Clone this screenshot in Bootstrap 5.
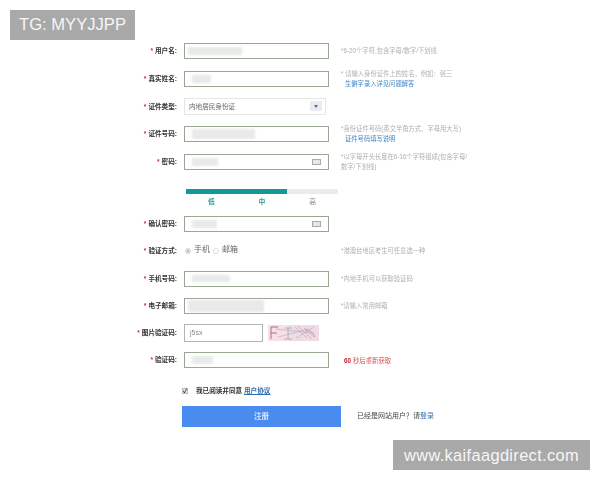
<!DOCTYPE html>
<html lang="zh">
<head>
<meta charset="utf-8">
<link rel="stylesheet" href="https://cdn.jsdelivr.net/npm/bootstrap@5.3.0/dist/css/bootstrap.min.css">
<style>
html,body{width:600px;height:480px;overflow:hidden;background:#fff;font-family:"Liberation Sans","Noto Sans CJK SC",sans-serif}
.sheet{padding-top:37px;filter:blur(.45px)}
.line{height:27.8px}
.line.tight{height:27.3px}
.lab{width:177px;font-size:6.6px;font-weight:700;color:#333;text-align:right;flex:none}
.lab i{color:#c0392b;font-style:normal;margin-right:2px}
.fieldbox{width:145px;height:16px;margin-left:7px;border:1px solid #98a694;background:#fff;flex:none;padding:0 3px}
.fieldbox.sel{width:142px;height:17px;border-color:#e6e6e6;font-size:6.6px;color:#666;padding:0 3px 0 4px}
.fieldbox.cap{width:79px;height:18px;font-size:7px;color:#888;padding-left:5px;border-color:#aeb8ac}
.smear{background:#e9e9e9;filter:blur(1px);height:8px}
.hint{margin-left:12px;font-size:6.3px;line-height:10px;color:#b0b0b0;width:126px;flex:none}
.hint a{display:block;color:#3e86c6;text-decoration:none;padding-left:4px}
.arrow{width:12px;height:10px;background:#e7ebf2}
.arrow::after{content:"";display:block;margin:4px auto 0;width:0;height:0;border:2px solid transparent;border-top:3px solid #667;border-bottom:0}
.kbd{width:9px;height:6px;border:1px solid #aaa;background:#e8e8e8;flex:none}
.meter{margin-left:186px;width:152px;height:5px;background:#ebebeb;margin-top:13px}
.meter-fill{width:101px;background:#109a96}
.levels{margin-left:186px;width:152px;font-size:6.8px;font-weight:700;line-height:9px;margin-top:3.5px;margin-bottom:3.8px}
.levels span{flex:1 1 0;text-align:center;color:#2d9a98}
.levels span:last-child{color:#888;font-weight:400}
.way{margin-left:7px;width:145px;font-size:8px;color:#666;padding-left:1px}
.dot{width:6px;height:6px;border-radius:50%;border:1px solid #ddd;background:#fff;flex:none}
.dot.on{background:#aaa;box-shadow:inset 0 0 0 1px #eee}
.way span{margin:-3px 3px 0 3px}
.pic{width:51px;height:16px;margin-left:5px;flex:none}
.again{margin-left:15px;font-size:6.4px;color:#d9534f}
.again b{color:#c8232c}
.agree{margin-left:182px;margin-top:10px;font-size:6.6px;font-weight:700;color:#333;height:14px}
.tick{width:6px;height:6px;background:#e2e2e2;border:1px solid #bbb;color:#234;font-size:6px;line-height:5px;text-align:center;margin-right:8px}
.agree a,.loginbit a{color:#2f6fb0}
.loginbit a{text-decoration:none}
.submitrow{margin-left:182px;margin-top:8px}
.go{width:159px;height:21px;padding:0;border:0;border-radius:0;background:#4a8bef;color:#d8e6fb;font-size:7.5px;font-weight:700}
.go:hover{background:#4a8bef;color:#d8e6fb}
.loginbit{margin-left:16px;font-size:7px;color:#444}
.stamp{position:absolute;background:#a9a9a9;color:#f6f6f6;display:flex;align-items:center;justify-content:center;height:30px}
.stamp-a{left:10px;top:10px;width:125px;font-size:16.6px}
.stamp-b{left:393px;top:440px;width:197px;font-size:16.4px;letter-spacing:.35px}
</style>
</head>
<body>
<div class="stamp stamp-a">TG: MYYJJPP</div>
<div class="stamp stamp-b">www.kaifaagdirect.com</div>
<form class="sheet">
  <div class="line d-flex align-items-center">
    <div class="lab"><i>*</i>用户名:</div>
    <div class="fieldbox d-flex align-items-center"><div class="smear" style="width:54px"></div></div>
    <div class="hint">*6-20个字符,包含字母/数字/下划线</div>
  </div>
  <div class="line d-flex align-items-center">
    <div class="lab"><i>*</i>真实姓名:</div>
    <div class="fieldbox d-flex align-items-center"><div class="smear ms-1" style="width:19px"></div></div>
    <div class="hint">* 请输入身份证件上的姓名，例如：张三<a href="#">生僻字录入详见问题解答</a></div>
  </div>
  <div class="line d-flex align-items-center">
    <div class="lab"><i>*</i>证件类型:</div>
    <div class="fieldbox sel d-flex align-items-center justify-content-between"><span>内地居民身份证</span><div class="arrow"></div></div>
  </div>
  <div class="line d-flex align-items-center">
    <div class="lab"><i>*</i>证件号码:</div>
    <div class="fieldbox d-flex align-items-center"><div class="smear ms-1" style="width:63px;height:10px"></div></div>
    <div class="hint">*身份证件号码(英文半角方式、字母用大写)<a href="#">证件号码填写说明</a></div>
  </div>
  <div class="line d-flex align-items-center">
    <div class="lab"><i>*</i>密码:</div>
    <div class="fieldbox d-flex align-items-center justify-content-between"><div class="smear ms-1" style="width:26px"></div><div class="kbd me-1"></div></div>
    <div class="hint">*以字母开头长度在6-16个字符组成(包含字母/数字/下划线)</div>
  </div>
  <div class="meter d-flex"><div class="meter-fill"></div></div>
  <div class="levels d-flex"><span>低</span><span>中</span><span>高</span></div>
  <div class="line tight d-flex align-items-center">
    <div class="lab"><i>*</i>确认密码:</div>
    <div class="fieldbox d-flex align-items-center justify-content-between"><div class="smear ms-1" style="width:25px"></div><div class="kbd me-1"></div></div>
  </div>
  <div class="line tight d-flex align-items-center">
    <div class="lab"><i>*</i>验证方式:</div>
    <div class="way d-flex align-items-center"><div class="dot on"></div><span>手机</span><div class="dot"></div><span>邮箱</span></div>
    <div class="hint">*港澳台地区考生可任意选一种</div>
  </div>
  <div class="line tight d-flex align-items-center">
    <div class="lab"><i>*</i>手机号码:</div>
    <div class="fieldbox d-flex align-items-center"><div class="smear ms-1" style="width:38px;height:7px"></div></div>
    <div class="hint">*内地手机可以获取验证码</div>
  </div>
  <div class="line tight d-flex align-items-center">
    <div class="lab"><i>*</i>电子邮箱:</div>
    <div class="fieldbox d-flex align-items-center"><div class="smear" style="width:76px;height:12px"></div></div>
    <div class="hint">*请输入常用邮箱</div>
  </div>
  <div class="line tight d-flex align-items-center">
    <div class="lab"><i>*</i>图片验证码:</div>
    <div class="fieldbox cap d-flex align-items-center">j5sx</div>
    <svg class="pic" viewBox="0 0 51 16" role="img" aria-label="验证码图片">
      <rect width="51" height="16" fill="#f6dfe5"/>
      <rect x="20" width="31" height="16" fill="#eedbe4"/>
      <path d="M3 14V2h7M3 8h6" fill="none" stroke="#a5708f" stroke-width="1"/>
      <path d="M17 3h7M20 3v11M16 14h8" fill="none" stroke="#8fb0ae" stroke-width=".8"/>
      <path d="M27 2l12 11M30 1l14 13M36 3l10 9M8 4l38 4M10 12l30-8M28 13l18-11" fill="none" stroke="#b8a3bd" stroke-width=".6"/>
      <path d="M38 5c3 0 6 1 9 7" fill="none" stroke="#c98a70" stroke-width=".8"/>
    </svg>
  </div>
  <div class="line tight d-flex align-items-center">
    <div class="lab"><i>*</i>验证码:</div>
    <div class="fieldbox d-flex align-items-center"><div class="smear ms-1" style="width:21px"></div></div>
    <div class="again"><b>60</b> 秒后重新获取</div>
  </div>
  <div class="agree d-flex align-items-center"><div class="tick">✓</div><span>我已阅读并同意&nbsp;<a href="#">用户协议</a></span></div>
  <div class="submitrow d-flex align-items-center">
    <button type="button" class="btn go">注册</button>
    <div class="loginbit">已经是网站用户？请<a href="#">登录</a></div>
  </div>
</form>
</body>
</html>
